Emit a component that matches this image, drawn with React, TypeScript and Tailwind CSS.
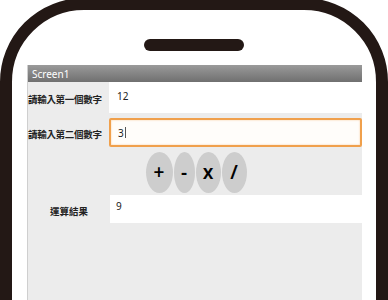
import React from "react";

const cjk = { fontFamily: '"Noto Sans", "Noto Sans CJK TC", sans-serif' };

export default function App() {
  return (
    <div className="w-[388px] h-[300px] overflow-hidden bg-white">
      <div className="mt-[-2px] h-[340px] border-[12px] border-[#231815] rounded-t-[84px] bg-white flex flex-col">
        <div className="mt-[29px] mx-auto w-[100px] h-[12px] rounded-full bg-[#231815]" />
        <div className="mt-[14px] ml-[15px] mr-[14px] flex-1 bg-[#ececec] border-l border-[#cfcfcf] flex flex-col" style={cjk}>
          <div className="h-[17px] bg-gradient-to-b from-[#9a9a9a] to-[#707070] flex items-center pl-[4px]">
            <span className="text-[10px] text-white leading-none">Screen1</span>
          </div>
          <div className="flex h-[31px]">
            <div className="w-[81px] flex items-center pt-[5px]">
              <span className="text-[9.5px] font-bold text-[#222] leading-none tracking-[-0.3px]">請輸入第一個數字</span>
            </div>
            <div className="flex-1 bg-white pl-[8px] pt-[9px]">
              <span className="text-[10px] text-[#222] leading-none block">12</span>
            </div>
          </div>
          <div className="flex h-[29px] mt-[5px]">
            <div className="w-[81px] flex items-center pt-[4px]">
              <span className="text-[9.5px] font-bold text-[#222] leading-none tracking-[-0.3px]">請輸入第二個數字</span>
            </div>
            <div className="flex-1 bg-[#fffdfa] border-2 border-[#f0a04c] rounded-[2px] pl-[7px] flex items-center shadow-[inset_0_0_2px_#f7c896]">
              <span className="text-[10px] text-[#222] leading-none">3</span>
              <span className="w-px h-[11px] bg-[#555] ml-[1px]" />
            </div>
          </div>
          <div className="flex justify-center mt-[5px] pl-[2px] h-[41px]">
            {[
              ["+", "w-[27px]"],
              ["-", "w-[21px]"],
              ["x", "w-[25px]"],
              ["/", "w-[25px]"],
            ].map(([t, w], i) => (
              <div
                key={i}
                className={`${w} h-[41px] rounded-[50%] bg-[#cdcdcd] flex items-center justify-center ${i > 0 ? "ml-px" : ""}`}
              >
                <span className="text-[19px] font-semibold text-black leading-none" style={{ fontFamily: '"Noto Sans", sans-serif' }}>{t}</span>
              </div>
            ))}
          </div>
          <div className="flex h-[28px] mt-[2px]">
            <div className="w-[82px] flex items-center justify-center pt-[6px]">
              <span className="text-[9.5px] font-bold text-[#222] leading-none">運算結果</span>
            </div>
            <div className="flex-1 bg-white pl-[6px] pt-[6px]">
              <span className="text-[10px] text-[#222] leading-none block">9</span>
            </div>
          </div>
        </div>
      </div>
    </div>
  );
}
